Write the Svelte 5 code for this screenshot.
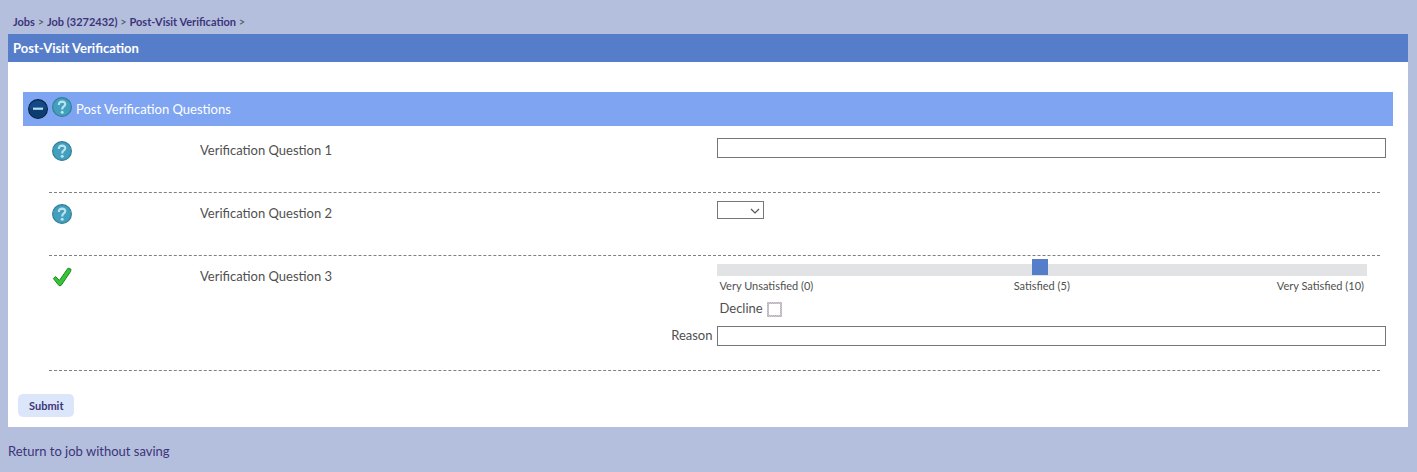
<script lang="ts">
  // Answers
  let answer = $state('');
  let choice = $state('');
  let rating = $state(5);
  let declined = $state(false);
  let reason = $state('');
  let open = $state(true);

  function submit(event: SubmitEvent) {
    event.preventDefault();
  }
</script>

{#snippet help()}
  <svg class="icon" viewBox="0 0 20 20" role="img" aria-label="Unanswered">
    <circle cx="10" cy="10" r="9.4" fill="#439fbe" stroke="#347f98" stroke-width="1.2" />
    <path d="M6.9 8Q6.7 4.7 10.1 4.7Q13.3 4.8 13.2 7.3Q13.1 8.8 11.4 9.7Q10.2 10.4 10.2 12.4" fill="none" stroke="#b9e3f0" stroke-width="2.2" />
    <circle cx="10.2" cy="15.2" r="1.5" fill="#b9e3f0" />
  </svg>
{/snippet}

<nav class="crumbs" aria-label="Breadcrumb">
  <a href="#jobs">Jobs</a> &gt; <a href="#job">Job (3272432)</a> &gt; <a href="#verification">Post-Visit Verification</a> &gt;
</nav>

<main class="panel">
  <h1>Post-Visit Verification</h1>

  <form onsubmit={submit}>
    <h2>
      <button type="button" class="toggle" aria-label="Toggle questions" aria-expanded={open} onclick={() => (open = !open)}>
        <svg viewBox="0 0 20 20">
          <circle cx="10" cy="10" r="9.4" fill="#124a88" stroke="#0a2346" stroke-width="1.2" />
          <path d="M1.4 10a8.6 8.6 0 0 0 17.2 0z" fill="#0c3c70" />
          <path d="M5 9.7h10" stroke="#b9dcf5" stroke-width="2.2" />
        </svg>
      </button>
      <span class="status">{@render help()}</span>
      Post Verification Questions
    </h2>

    {#if open}
      <div class="questions">
        <div class="row">
          <div class="question">
            {@render help()}
            <label for="q1">Verification Question 1</label>
          </div>
          <div class="answer">
            <input id="q1" class="text" type="text" bind:value={answer} />
          </div>
        </div>
        <hr />

        <div class="row">
          <div class="question">
            {@render help()}
            <label for="q2">Verification Question 2</label>
          </div>
          <div class="answer">
            <span class="select">
              <select id="q2" bind:value={choice}>
                <option value=""></option>
                <option value="yes">Yes</option>
                <option value="no">No</option>
              </select>
              <svg viewBox="0 0 10 6"><path d="M1 1l4 4 4-4" fill="none" stroke="#555" stroke-width="1.2" /></svg>
            </span>
          </div>
        </div>
        <hr />

        <div class="row rated">
          <div class="question">
            <svg class="icon" viewBox="0 0 20 20" role="img" aria-label="Answered">
              <path d="M1.4 11.6L3.6 9.6L7.4 13.4L16 1.2L19 2.2L18.6 4.4L9 18.6L7 18.6Z" fill="#38c338" stroke="#168a1c" stroke-linejoin="round" />
            </svg>
            <label for="q3">Verification Question 3</label>
          </div>
          <div class="answer">
            <div class="track">
              <input id="q3" type="range" min="0" max="10" bind:value={rating} />
            </div>
            <div class="scale">
              <span>Very Unsatisfied (0)</span>
              <span>Satisfied (5)</span>
              <span>Very Satisfied (10)</span>
            </div>
            <div class="decline">
              <label for="decline">Decline</label>
              <input id="decline" type="checkbox" bind:checked={declined} />
            </div>
          </div>
          <label class="reason" for="reason">Reason</label>
          <input id="reason" class="text" type="text" bind:value={reason} />
        </div>
        <hr />
      </div>
    {/if}

    <button class="submit">Submit</button>
  </form>
</main>

<a class="return" href="#job">Return to job without saving</a>

<style>
  :global(body) {
    background: #b4bfde;
    color: #505050;
    font: 13px/20px Lato, sans-serif;
  }

  a {
    color: #3d3478;
    text-decoration: none;
  }

  .crumbs {
    padding: 14px 13px 4px;
    font-size: 11px;
    line-height: 16px;
  }

  .crumbs a {
    font-weight: 700;
  }

  .panel {
    margin: 0 9px 0 8px;
    background: #fff;
  }

  h1 {
    margin: 0;
    padding: 4px 5px;
    background: #567dca;
    color: #fff;
    font-size: 13px;
    line-height: 20px;
  }

  form {
    padding: 30px 15px 10px;
  }

  h2 {
    display: flex;
    align-items: center;
    gap: 4px;
    height: 34px;
    margin: 0;
    padding: 0 5px;
    background: #7ea4f2;
    color: #fff;
    font-size: 13px;
    font-weight: 400;
  }

  .toggle {
    width: 20px;
    height: 20px;
    padding: 0;
    border: 0;
    background: none;
  }

  .toggle svg,
  .icon {
    display: block;
    flex: none;
    width: 20px;
    height: 20px;
  }

  .status {
    padding-bottom: 4px;
  }

  .questions {
    padding: 4px 7px 0 26px;
  }

  .row {
    display: grid;
    grid-template-columns: 1fr calc(50% + 1px);
    min-height: 54px;
    padding-top: 8px;
  }

  .question {
    display: flex;
    align-items: flex-start;
    gap: 128px;
    padding: 3px 3px 0;
  }

  .question label {
    line-height: 18px;
  }

  hr {
    margin: 0 6px 0 0;
    border: 0;
    border-top: 1px dashed #808080;
  }

  .text {
    box-sizing: border-box;
    width: 100%;
    height: 20px;
    margin: 0;
    padding: 1px 4px;
    border: 1px solid #767676;
    border-radius: 0;
    font: inherit;
  }

  .select {
    display: grid;
    align-items: center;
    justify-items: end;
    width: 47px;
  }

  .select select,
  .select svg {
    grid-area: 1 / 1;
  }

  .select select {
    width: 47px;
    height: 18px;
    padding: 0 16px 0 4px;
    appearance: none;
    border: 1px solid #767676;
    border-radius: 0;
    background: #fff;
    font: inherit;
    line-height: 16px;
  }

  .select svg {
    width: 10px;
    height: 6px;
    margin: 2px 4px 0 0;
    pointer-events: none;
  }

  .rated {
    row-gap: 8px;
    padding-bottom: 24px;
  }

  .track {
    display: flex;
    margin-right: 19px;
    padding-right: 4px;
    background: #e2e3e4;
  }

  .track input {
    width: 100%;
    height: 12px;
    margin: 0;
    appearance: none;
    background: none;
  }

  .track input::-webkit-slider-runnable-track {
    height: 12px;
  }

  .track input::-webkit-slider-thumb {
    width: 16px;
    height: 16px;
    margin-top: -5px;
    appearance: none;
    background: #567dca;
  }

  .scale {
    display: grid;
    grid-template-columns: repeat(3, 1fr);
    margin-right: 22px;
    padding: 2px 0 0 3px;
    font-size: 11px;
    line-height: 16px;
  }

  .scale span:nth-child(2) {
    text-align: center;
  }

  .scale span:last-child {
    text-align: right;
  }

  .decline {
    display: flex;
    align-items: center;
    gap: 4px;
    padding: 4px 3px 0;
  }

  .decline input {
    width: 15px;
    height: 15px;
    margin: 2px 0 0;
    appearance: none;
    border: 2px solid transparent;
    background:
      linear-gradient(#fff, #fff) padding-box,
      repeating-conic-gradient(#cba9d0 0 25%, #c2d0c0 0 50%) 0 0 / 2px 2px border-box;
  }

  .decline input:checked {
    background: #567dca;
  }

  .reason {
    padding-right: 4px;
    line-height: 18px;
    text-align: right;
  }

  .submit {
    display: block;
    height: 23px;
    margin: 23px 0 0 -5px;
    padding: 0 11px;
    border: 0;
    border-radius: 5px;
    background: #dbe6fa;
    color: #3d3478;
    font: 700 11px/23px Lato, sans-serif;
  }

  .return {
    display: block;
    padding: 14px 8px 10px;
  }
</style>
